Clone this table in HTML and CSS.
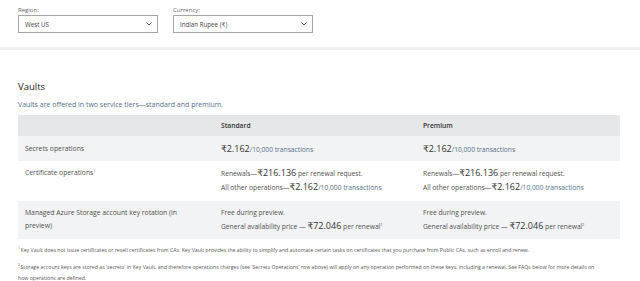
FILE: index.html
```html
<!DOCTYPE html>
<html lang="en">
<head>
  <meta charset="UTF-8">
  <title>Key Vault pricing</title>
  <link rel="stylesheet" href="styles.css">
</head>
<body>
  <div class="filters">
    <div class="filter">
      <label>Region:</label>
      <div class="select">
        <span>West US</span>
        <svg class="chevron" width="6" height="4" viewBox="0 0 6 4"><path d="M0.5 0.5 L3 3 L5.5 0.5" fill="none" stroke="#444" stroke-width="0.9"/></svg>
      </div>
    </div>
    <div class="filter">
      <label>Currency:</label>
      <div class="select">
        <span>Indian Rupee (₹)</span>
        <svg class="chevron" width="6" height="4" viewBox="0 0 6 4"><path d="M0.5 0.5 L3 3 L5.5 0.5" fill="none" stroke="#444" stroke-width="0.9"/></svg>
      </div>
    </div>
  </div>
  <div class="divider"></div>

  <section class="vaults">
    <h2>Vaults</h2>
    <p class="intro">Vaults are offered in two service tiers—standard and premium.</p>

    <table class="pricing">
      <thead>
        <tr>
          <th></th>
          <th>Standard</th>
          <th>Premium</th>
        </tr>
      </thead>
      <tbody>
        <tr class="shade">
          <td class="label">Secrets operations</td>
          <td><span class="price">₹2.162</span><span class="unit">/10,000 transactions</span></td>
          <td><span class="price">₹2.162</span><span class="unit">/10,000 transactions</span></td>
        </tr>
        <tr>
          <td class="label">Certificate operations<sup>1</sup></td>
          <td>
            <div class="line">Renewals—<span class="price">₹216.136</span> per renewal request.</div>
            <div class="line">All other operations—<span class="price">₹2.162</span><span class="unit">/10,000 transactions</span></div>
          </td>
          <td>
            <div class="line">Renewals—<span class="price">₹216.136</span> per renewal request.</div>
            <div class="line">All other operations—<span class="price">₹2.162</span><span class="unit">/10,000 transactions</span></div>
          </td>
        </tr>
        <tr class="shade">
          <td class="label">Managed Azure Storage account key rotation (in preview)</td>
          <td>
            <div class="line">Free during preview.</div>
            <div class="line">General availability price — <span class="price">₹72.046</span> per renewal<sup>2</sup></div>
          </td>
          <td>
            <div class="line">Free during preview.</div>
            <div class="line">General availability price — <span class="price">₹72.046</span> per renewal<sup>2</sup></div>
          </td>
        </tr>
      </tbody>
    </table>

    <div class="notes">
      <p class="note"><sup>1</sup>Key Vault does not issue certificates or resell certificates from CAs. Key Vault provides the ability to simplify and automate certain tasks on certificates that you purchase from Public CAs, such as enroll and renew.</p>
      <p class="note"><sup>2</sup>Storage account keys are stored as 'secrets' in Key Vault, and therefore operations charges (see 'Secrets Operations' row above) will apply on any operation performed on these keys, including a renewal. See FAQs below for more details on how operations are defined.</p>
    </div>
  </section>
</body>
</html>
```

FILE: styles.css
```css
:root {
  --text: #505050;
  --dark: #222;
  --muted: #56708c;
  --header: #e6e7e8;
  --shade: #f2f3f4;
  --border: #a6a6a6;
}

* {
  margin: 0;
  padding: 0;
  box-sizing: border-box;
}

body {
  font-family: 'Open Sans', 'DejaVu Sans', sans-serif;
  color: var(--text);
  background: #fff;
}

.filters {
  display: flex;
  gap: 15px;
  padding: 7px 18px 0;
  height: 47px;
}

.filter label {
  display: block;
  font-size: 6px;
  line-height: 7px;
  color: #666;
}

.select {
  width: 140px;
  height: 18px;
  margin-top: 1px;
  border: 1px solid var(--border);
  display: flex;
  align-items: center;
  justify-content: space-between;
  padding: 0 5px 0 6px;
  font-size: 6.2px;
  color: #444;
}

.divider {
  height: 3px;
  background: #efefef;
}

.vaults {
  padding: 31px 20px 0 18px;
}

.vaults h2 {
  font-size: 9.5px;
  font-weight: 400;
  color: var(--dark);
  line-height: 12px;
}

.intro {
  margin-top: 7px;
  font-size: 7px;
  line-height: 9px;
  color: var(--muted);
}

.pricing {
  width: 602px;
  margin-top: 6px;
  border-collapse: collapse;
  table-layout: fixed;
  font-size: 6.7px;
}

.pricing th {
  background: var(--header);
  height: 21px;
  text-align: left;
  font-weight: 600;
  color: #333;
  padding: 0 7px;
}

.pricing th:first-child {
  width: 196px;
}

.pricing th:nth-child(2) {
  width: 202px;
}

.pricing td {
  vertical-align: top;
  padding: 5px 7px 6px;
  line-height: 13px;
}

.pricing tr.shade td {
  background: var(--shade);
}

.pricing tbody tr:first-child td {
  height: 25px;
  vertical-align: middle;
  padding: 0 7px;
}

.pricing tbody tr:nth-child(2) td {
  height: 40px;
}

.pricing tbody tr:nth-child(3) td {
  height: 36px;
}

.pricing td.label {
  font-size: 6.8px;
  line-height: 13px;
  padding-right: 30px;
}

.price {
  font-size: 9px;
  color: #333;
}

.unit {
  color: var(--muted);
}

sup {
  font-size: 3.5px;
  vertical-align: 3px;
  line-height: 0;
}

.notes {
  display: flex;
  flex-direction: column;
  gap: 6px;
  margin-top: 6px;
  max-width: 578px;
}

.note {
  font-size: 5.2px;
  line-height: 11px;
  color: #555;
}

.note sup {
  margin-right: 0.5px;
}
```
